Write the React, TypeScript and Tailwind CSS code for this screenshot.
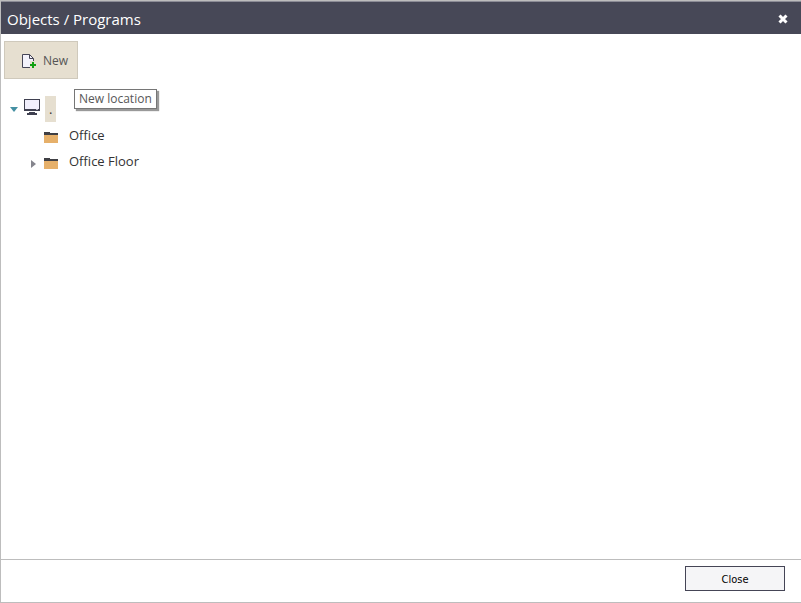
function NewIcon() {
    return (
        <svg className="size-4" viewBox="0 0 16 16" fill="none" aria-hidden="true">
            <path d="M1.5 1.5h7l4 4v9h-11z" fill="#f3f2fb" stroke="#454556" />
            <path d="M8.5 1.5v4h4" stroke="#454556" />
            <path d="M9 8h6v7H9z" fill="#e6dfd0" />
            <path d="M11 9h2v2h2v2h-2v2h-2v-2H9v-2h2z" fill="#12a012" />
        </svg>
    )
}

function MonitorIcon() {
    return (
        <svg className="h-4 w-4 shrink-0" viewBox="0 0 16 16" shapeRendering="crispEdges" aria-hidden="true">
            <path d="M0 0h16v12H0z" fill="#3f4050" />
            <path d="M1 1h14v9H1z" fill="#f1effc" />
            <path d="M12 10h2v1h-2z" fill="#b9b8c6" />
            <path d="M5 13h6v1h2v2H3v-2h2z" fill="#3f4050" />
        </svg>
    )
}

function FolderIcon() {
    return (
        <svg className="h-3 w-4 shrink-0" viewBox="0 0 16 12" shapeRendering="crispEdges" aria-hidden="true">
            <path d="M1 1h5l1 1h8v3H1z" fill="#3f3f44" />
            <path d="M1 4h14v8H1z" fill="#e6b06a" />
        </svg>
    )
}

function Folder({ name, expandable }: { name: string; expandable?: boolean }) {
    return (
        <li role="treeitem" aria-selected={false} className="flex h-[26px] items-center">
            <div className="w-[13px] pt-1">
                {expandable && (
                    <button type="button" aria-label={`Expand ${name}`} className="block">
                        <svg className="h-2 w-2" viewBox="0 0 8 8" aria-hidden="true">
                            <path d="M1 0l5 4-5 4z" fill="#85858d" />
                        </svg>
                    </button>
                )}
            </div>
            <div className="pt-0.5">
                <FolderIcon />
            </div>
            <span className="pl-2.5">{name}</span>
        </li>
    )
}

function App() {
    return (
        <div className="flex h-screen flex-col border-y border-l border-[#bdbdbd] bg-white font-['Open_Sans','Noto_Sans',sans-serif] text-[#333333]">
            <header className="flex h-[33px] shrink-0 items-center justify-between border-t border-[#8c8c96] bg-[#474857] pt-0.5 pr-3 pl-1.5">
                <h1 className="text-[15px] text-white">Objects / Programs</h1>
                <button type="button" aria-label="Close dialog">
                    <svg className="size-3" viewBox="0 0 12 12" aria-hidden="true">
                        <path d="M2.5 2.5l7 7M9.5 2.5l-7 7" stroke="#ffffff" strokeWidth="3" />
                    </svg>
                </button>
            </header>

            <main className="grow pt-[7px] pl-[3px]">
                <div className="relative w-fit">
                    <button
                        type="button"
                        aria-describedby="new-tip"
                        className="flex h-[38px] w-[74px] items-center gap-1.5 border border-[#cfc9bc] bg-[#e6dfd0] pt-0.5 pl-4 text-xs text-[#555555]"
                    >
                        <NewIcon />
                        New
                    </button>
                    <div
                        id="new-tip"
                        role="tooltip"
                        className="absolute top-12 left-[70px] flex h-5 items-center border border-[#767676] bg-white px-1 text-xs whitespace-nowrap text-[#575757] shadow-[2px_2px_1px_#999999]"
                    >
                        New location
                    </div>
                </div>

                <ul role="tree" aria-label="Locations" className="pt-[17px] pl-1.5 text-[13px]">
                    <li role="treeitem" aria-expanded={true} aria-selected={true}>
                        <div className="flex h-[26px]">
                            <button type="button" aria-label="Collapse ." className="w-[14px]">
                                <svg className="h-2 w-2" viewBox="0 0 8 8" aria-hidden="true">
                                    <path d="M0 2h8L4 7z" fill="#4590a3" />
                                </svg>
                            </button>
                            <div className="pt-[3px]">
                                <MonitorIcon />
                            </div>
                            <span className="ml-[5px] bg-[#e6dfd0] px-1 leading-[26px]">.</span>
                        </div>
                        <ul role="group" className="pt-px pl-5">
                            <Folder name="Office" />
                            <Folder name="Office Floor" expandable />
                        </ul>
                    </li>
                </ul>
            </main>

            <footer className="flex h-[43px] shrink-0 justify-end border-t border-[#bdbdbd] pt-1.5 pr-4">
                <button
                    type="button"
                    className="h-[25px] w-[100px] border border-[#454556] bg-[#f5f5f7] pt-1 font-['DejaVu_Sans_Condensed','DejaVu_Sans',sans-serif] text-[11px] text-black"
                >
                    Close
                </button>
            </footer>
        </div>
    )
}

export default App
